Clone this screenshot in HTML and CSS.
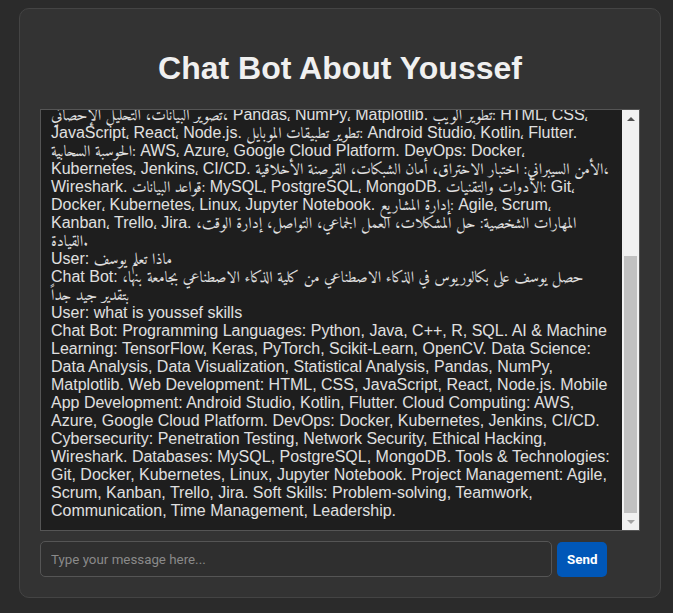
FILE: index.html
```html
<!DOCTYPE html>
<html lang="en">
<head>
<meta charset="utf-8">
<title>Chat Bot About Youssef</title>
<link rel="stylesheet" href="styles.css">
</head>
<body>
<div class="container">
  <h1 class="title">Chat Bot About Youssef</h1>
  <div class="chat-box">
    <div class="chat-log" id="chatLog">
      <div class="msg">User: who is youssef</div>
      <div class="msg">Chat Bot: Youssef is an AI engineer and software developer from Egypt. He is passionate about machine learning, data science and building intelligent applications that solve real problems.</div>
      <div class="msg">User: what did youssef study</div>
      <div class="msg">Chat Bot: Youssef earned a Bachelor's degree in Artificial Intelligence from the Faculty of Artificial Intelligence at Benha University, with a grade of Very Good. His studies covered machine learning and computer vision.</div>
      <div class="msg">User: <span class="ar" lang="ar">ما هي مهارات يوسف</span></div>
      <div class="msg">Chat Bot: <span class="ar" lang="ar">لغات البرمجة:</span> Python، Java، C++، R، SQL. <span class="ar" lang="ar">الذكاء الاصطناعي وتعلم الآلة:</span> TensorFlow، Keras، PyTorch، Scikit-Learn، OpenCV، NLP. <span class="ar" lang="ar">علم البيانات: تحليل البيانات، تصوير البيانات، التحليل الإحصائي،</span> Pandas، NumPy، Matplotlib. <span class="ar" lang="ar">تطوير الويب:</span> HTML، CSS، JavaScript، React، Node.js. <span class="ar" lang="ar">تطوير تطبيقات الموبايل:</span> Android Studio، Kotlin، Flutter. <span class="ar" lang="ar">الحوسبة السحابية:</span> AWS، Azure، Google Cloud Platform. DevOps: Docker، Kubernetes، Jenkins، CI/CD. <span class="ar" lang="ar">الأمن السيبراني: اختبار الاختراق، أمان الشبكات، القرصنة الأخلاقية،</span> Wireshark. <span class="ar" lang="ar">قواعد البيانات:</span> MySQL، PostgreSQL، MongoDB. <span class="ar" lang="ar">الأدوات والتقنيات:</span> Git، Docker، Kubernetes، Linux، Jupyter Notebook. <span class="ar" lang="ar">إدارة المشاريع:</span> Agile، Scrum، Kanban، Trello، Jira. <span class="ar" lang="ar">المهارات الشخصية: حل المشكلات، العمل الجماعي، التواصل، إدارة الوقت، القيادة.</span></div>
      <div class="msg">User: <span class="ar" lang="ar">ماذا تعلم يوسف</span></div>
      <div class="msg">Chat Bot: <span class="ar" lang="ar">حصل يوسف على بكالوريوس في الذكاء الاصطناعي من كلية الذكاء الاصطناعي بجامعة بنها، بتقدير جيد جداً</span></div>
      <div class="msg">User: what is youssef skills</div>
      <div class="msg">Chat Bot: Programming Languages: Python, Java, C++, R, SQL. AI &amp; Machine Learning: TensorFlow, Keras, PyTorch, Scikit-Learn, OpenCV. Data Science: Data Analysis, Data Visualization, Statistical Analysis, Pandas, NumPy, Matplotlib. Web Development: HTML, CSS, JavaScript, React, Node.js. Mobile App Development: Android Studio, Kotlin, Flutter. Cloud Computing: AWS, Azure, Google Cloud Platform. DevOps: Docker, Kubernetes, Jenkins, CI/CD. Cybersecurity: Penetration Testing, Network Security, Ethical Hacking, Wireshark. Databases: MySQL, PostgreSQL, MongoDB. Tools &amp; Technologies: Git, Docker, Kubernetes, Linux, Jupyter Notebook. Project Management: Agile, Scrum, Kanban, Trello, Jira. Soft Skills: Problem-solving, Teamwork, Communication, Time Management, Leadership.</div>
    </div>
    <div class="scrollbar" aria-hidden="true">
      <div class="sb-btn">
        <svg width="8" height="4" viewBox="0 0 8 4"><polygon points="4,0 8,4 0,4" fill="#505050"/></svg>
      </div>
      <div class="sb-track" id="sbTrack">
        <div class="sb-thumb" id="sbThumb"></div>
      </div>
      <div class="sb-btn">
        <svg width="8" height="4" viewBox="0 0 8 4"><polygon points="0,0 8,0 4,4" fill="#a3a3a3"/></svg>
      </div>
    </div>
  </div>
  <div class="input-row">
    <input class="msg-input" type="text" placeholder="Type your message here...">
    <button class="send-btn" type="button">Send</button>
  </div>
</div>
<script src="script.js"></script>
</body>
</html>
```

FILE: styles.css
```css
body {
  margin: 0;
  padding: 8px 19px;
  background: #2b2b2b;
  font-family: "Liberation Sans", Arial, sans-serif;
}

.container {
  width: 600px;
  padding: 20px;
  background: #333333;
  border: 1px solid #444444;
  border-radius: 10px;
}

.title {
  margin: 21px 0 22px;
  font-size: 32px;
  font-weight: bold;
  text-align: center;
  color: #f0f0f0;
}

.chat-box {
  display: flex;
  height: 420px;
  border: 1px solid #555555;
  background: #1e1e1e;
}

.chat-log {
  flex: 1;
  min-width: 0;
  padding: 10px;
  color: #e0e0e0;
  font-family: "Liberation Sans", "Noto Naskh Arabic", sans-serif;
  font-size: 16px;
  line-height: 18px;
  overflow-y: auto;
  scrollbar-width: none;
}

.ar {
  font-family: "Amiri", "Noto Naskh Arabic", sans-serif;
  font-size: 15.65px;
  line-height: 12px;
}

.scrollbar {
  display: flex;
  flex-direction: column;
  width: 17px;
  flex: none;
  background: #f1f1f1;
}

.sb-btn {
  display: flex;
  align-items: center;
  justify-content: center;
  height: 17px;
  flex: none;
}

.sb-btn svg {
  display: block;
}

.sb-track {
  flex: 1;
  display: flex;
  flex-direction: column;
}

.sb-thumb {
  margin: 0 2px;
  background: #c1c1c1;
  height: 256px;
}

.input-row {
  display: flex;
  align-items: flex-end;
  gap: 5px;
  margin-top: 10px;
}

.msg-input {
  box-sizing: border-box;
  width: 512px;
  height: 36px;
  padding: 0 10px;
  border: 1px solid #555555;
  border-radius: 5px;
  background: #2f2f2f;
  color: #eeeeee;
  font-family: Roboto, sans-serif;
  font-size: 13.333px;
  outline: none;
}

.msg-input::placeholder {
  color: #8a8a8a;
}

.send-btn {
  box-sizing: border-box;
  height: 35px;
  padding: 0 10px;
  border: none;
  border-radius: 5px;
  background: #0057b8;
  color: #ffffff;
  font-family: Roboto, sans-serif;
  font-size: 13.333px;
  font-weight: bold;
}
```

FILE: script.js
```js
var log = document.getElementById('chatLog');
var track = document.getElementById('sbTrack');
var thumb = document.getElementById('sbThumb');
log.scrollTop = log.scrollHeight;
var trackH = track.clientHeight;
var thumbH = trackH * log.clientHeight / log.scrollHeight;
var range = log.scrollHeight - log.clientHeight;
var offset = range > 0 ? (trackH - thumbH) * log.scrollTop / range : 0;
thumb.style.height = thumbH + 'px';
thumb.style.marginTop = offset + 'px';
```
